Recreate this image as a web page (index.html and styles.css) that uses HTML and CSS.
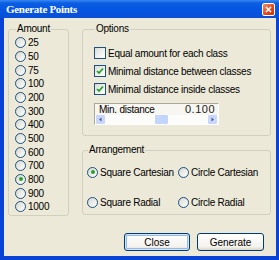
FILE: index.html
```html
<!DOCTYPE html>
<html lang="en">
<head>
    <meta charset="UTF-8">
    <title>Generate Points</title>
    <link rel="stylesheet" href="styles.css">
</head>
<body>
    <div class="window">
        <div class="titlebar">
            <span class="title">Generate Points</span>
            <span class="close-x">
                <svg width="7" height="7" viewBox="0 0 7 7"><path d="M1 1L6 6M6 1L1 6" stroke="#fff" stroke-width="1.6"/></svg>
            </span>
        </div>
        <div class="frame">
            <div class="main">
                <fieldset class="group amount">
                    <legend>Amount</legend>
                    <div class="opt"><span class="radio"></span>25</div>
                    <div class="opt"><span class="radio"></span>50</div>
                    <div class="opt"><span class="radio"></span>75</div>
                    <div class="opt"><span class="radio"></span>100</div>
                    <div class="opt"><span class="radio"></span>200</div>
                    <div class="opt"><span class="radio"></span>300</div>
                    <div class="opt"><span class="radio"></span>400</div>
                    <div class="opt"><span class="radio"></span>500</div>
                    <div class="opt"><span class="radio"></span>600</div>
                    <div class="opt"><span class="radio"></span>700</div>
                    <div class="opt"><span class="radio checked"></span>800</div>
                    <div class="opt"><span class="radio"></span>900</div>
                    <div class="opt"><span class="radio"></span>1000</div>
                </fieldset>
                <div class="right">
                    <fieldset class="group options">
                        <legend>Options</legend>
                        <div class="check-row"><span class="check"></span>Equal amount for each class</div>
                        <div class="check-row"><span class="check checked"><svg width="8" height="8" viewBox="0 0 8 8"><path d="M1 4L3 6L7 1.5" fill="none" stroke="#21a121" stroke-width="1.7"/></svg></span>Minimal distance between classes</div>
                        <div class="check-row"><span class="check checked"><svg width="8" height="8" viewBox="0 0 8 8"><path d="M1 4L3 6L7 1.5" fill="none" stroke="#21a121" stroke-width="1.7"/></svg></span>Minimal distance inside classes</div>
                        <div class="distance">
                            <div class="distance-label">
                                <span>Min. distance</span>
                                <span class="value">0.100</span>
                            </div>
                            <div class="scrollbar">
                                <span class="arrow"><svg width="5" height="5" viewBox="0 0 5 5"><path d="M3.5 0.5L1 2.5L3.5 4.5Z" fill="#4d6185"/></svg></span>
                                <span class="track"><span class="thumb"></span></span>
                                <span class="arrow"><svg width="5" height="5" viewBox="0 0 5 5"><path d="M1.5 0.5L4 2.5L1.5 4.5Z" fill="#4d6185"/></svg></span>
                            </div>
                        </div>
                    </fieldset>
                    <fieldset class="group arrangement">
                        <legend>Arrangement</legend>
                        <div class="arr-grid">
                            <div class="opt"><span class="radio checked"></span>Square Cartesian</div>
                            <div class="opt"><span class="radio"></span>Circle Cartesian</div>
                            <div class="opt"><span class="radio"></span>Square Radial</div>
                            <div class="opt"><span class="radio"></span>Circle Radial</div>
                        </div>
                    </fieldset>
                </div>
            </div>
            <div class="buttons">
                <button class="btn default">Close</button>
                <button class="btn">Generate</button>
            </div>
        </div>
    </div>
</body>
</html>
```
FILE: styles.css
```css
body {
    margin: 0;
    font-family: "Liberation Sans", Arial, sans-serif;
    font-size: 10px;
    letter-spacing: -0.25px;
    color: #000;
}

.window {
    width: 279px;
    height: 260px;
    display: flex;
    flex-direction: column;
    background: #0842d6;
}

.titlebar {
    height: 18px;
    flex: none;
    display: flex;
    align-items: center;
    justify-content: space-between;
    padding: 0 4px 0 6px;
    background: linear-gradient(#3a86f4 0, #0b5fe0 3px, #0556e4 50%, #0a4fd4 100%);
}

.title {
    color: #fff;
    font-family: "Liberation Serif", serif;
    font-weight: bold;
    font-size: 11px;
    letter-spacing: -0.3px;
}

.close-x {
    width: 11px;
    height: 11px;
    border: 1px solid #fff;
    border-radius: 2px;
    background: linear-gradient(135deg, #f08e6c, #e0461c 60%, #c9300b);
    display: flex;
    align-items: center;
    justify-content: center;
}

.frame {
    flex: 1;
    margin: 0 3px 4px 4px;
    background: #ece9d8;
    display: flex;
    flex-direction: column;
    padding: 5px 0 0 4px;
}

.main {
    display: flex;
    gap: 13px;
}

.group {
    margin: 0;
    border: 1px solid #d0d0bf;
    border-radius: 3px;
    box-sizing: border-box;
}

.group legend {
    padding: 0 1px;
    margin-left: 1px;
    line-height: 12px;
    color: #000;
}

.amount {
    width: 61px;
    height: 193px;
    padding: 1px 0 0 6px;
}

.opt {
    display: flex;
    align-items: center;
    height: 13.67px;
    white-space: nowrap;
}

.radio {
    width: 9px;
    height: 9px;
    border: 1px solid #1c5180;
    border-radius: 50%;
    background: linear-gradient(135deg, #d8d8d0, #fff);
    margin-right: 2px;
    display: flex;
    align-items: center;
    justify-content: center;
    flex: none;
}

.radio.checked::after {
    content: "";
    width: 4px;
    height: 4px;
    border-radius: 50%;
    background: #2aa22a;
}

.right {
    width: 189px;
    display: flex;
    flex-direction: column;
    gap: 8px;
}

.options {
    height: 113px;
    padding: 9px 0 0 11px;
}

.check-row {
    display: flex;
    align-items: center;
    height: 18px;
    white-space: nowrap;
}

.check {
    width: 10px;
    height: 10px;
    border: 1px solid #1c5180;
    background: linear-gradient(135deg, #dcdcd5, #fff);
    margin-right: 2px;
    display: flex;
    align-items: center;
    justify-content: center;
    flex: none;
}

.distance {
    margin-top: 5px;
    width: 125px;
    height: 22px;
    box-sizing: border-box;
    border: 1px solid;
    border-color: #aca899 #fff #fff #aca899;
    background: #f7f6f0;
    display: flex;
    flex-direction: column;
}

.distance-label {
    display: flex;
    justify-content: space-between;
    padding: 0 3px 0 4px;
    height: 11px;
    line-height: 11px;
}

.value {
    font-size: 11px;
    letter-spacing: 0.5px;
    color: #222;
}

.scrollbar {
    display: flex;
    height: 9px;
    padding: 0 1px;
    background: #fcfcfa;
}

.arrow {
    width: 9px;
    height: 9px;
    background: #c8d7fb;
    border-radius: 1px;
    display: flex;
    align-items: center;
    justify-content: center;
}

.track {
    flex: 1;
    display: flex;
    justify-content: center;
}

.thumb {
    width: 13px;
    background: #c4d5fb;
    border-radius: 1px;
    margin-left: 10px;
}

.arrangement {
    height: 71px;
    padding: 9px 0 0 4px;
}

.arr-grid {
    display: grid;
    grid-template-columns: 91px 1fr;
    row-gap: 16px;
}

.arr-grid .opt {
    height: 14px;
}

.buttons {
    display: flex;
    justify-content: flex-end;
    gap: 7px;
    margin-top: 17px;
    padding-right: 12px;
}

.btn {
    font-family: "Liberation Sans", Arial, sans-serif;
    font-size: 10px;
    height: 18px;
    width: 67px;
    padding: 0;
    border: 1px solid #003c74;
    border-radius: 3px;
    background: linear-gradient(#fff, #f3f2ec 80%, #d8d3c6);
    color: #000;
}

.btn.default {
    width: 66px;
    box-shadow: inset 0 0 0 1px #cee7ff, inset 0 0 0 2px #98b8ea;
}
```
